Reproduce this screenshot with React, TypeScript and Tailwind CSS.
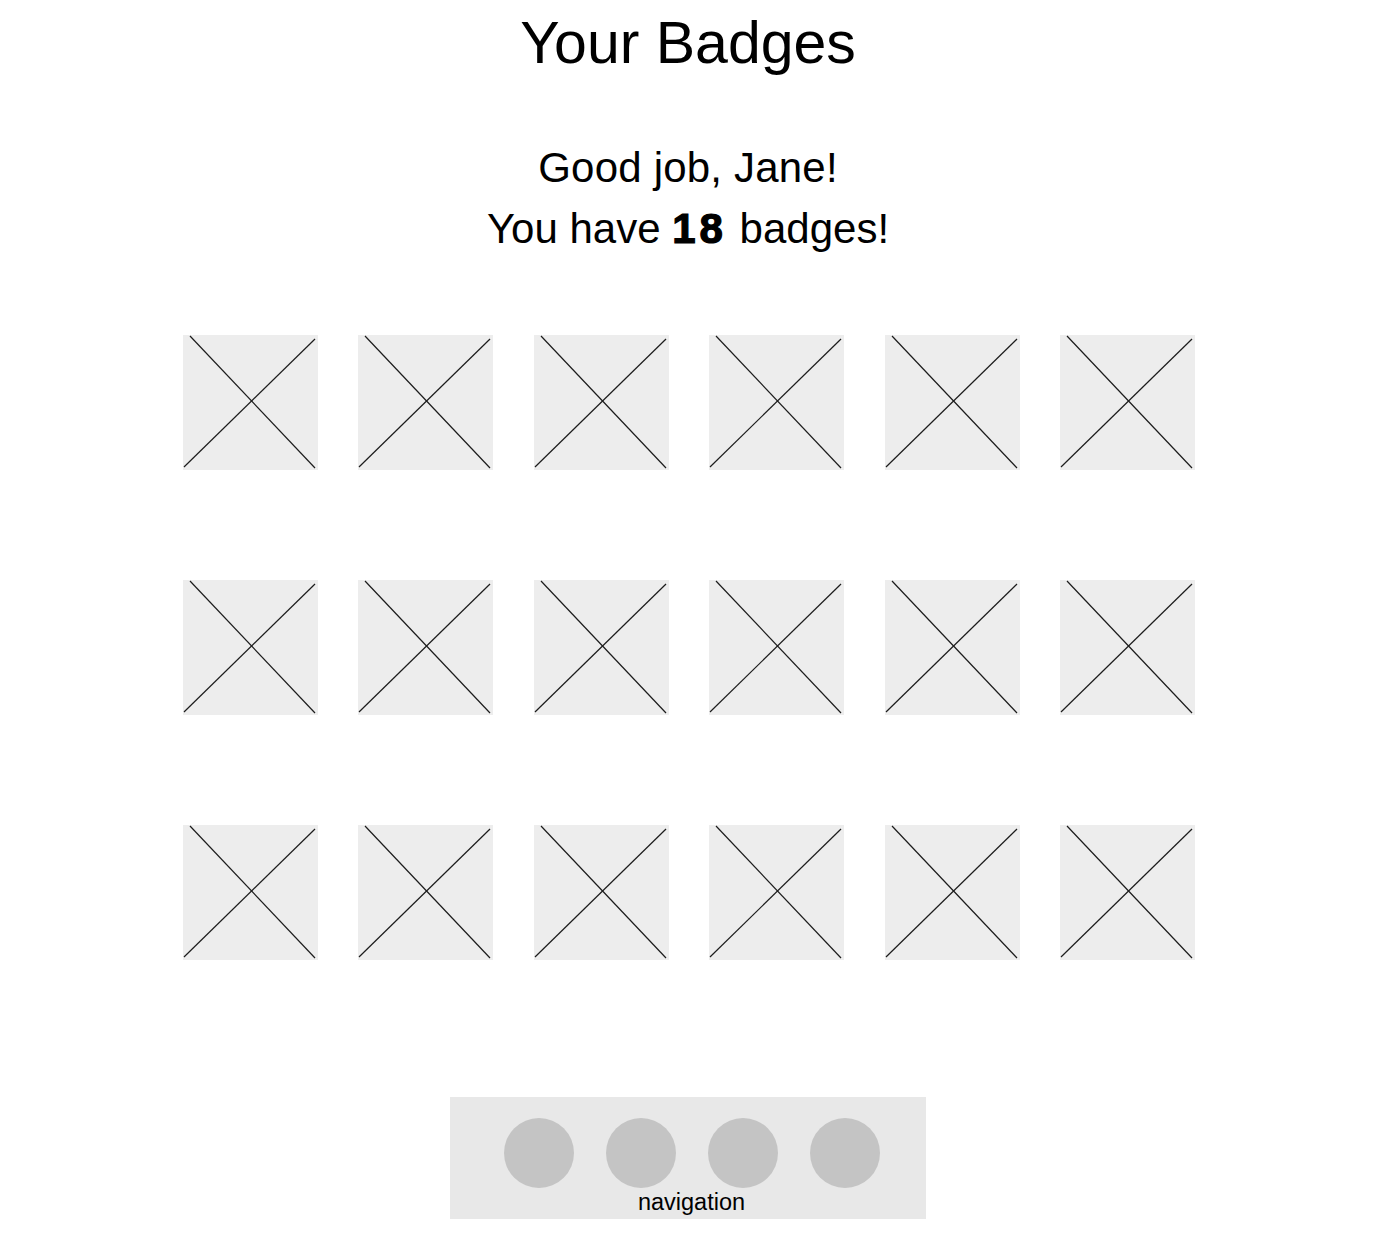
import React from "react";

function Badge() {
  return (
    <div className="w-[135px] h-[135px] bg-[#ededed]">
      <svg width="135" height="135" viewBox="0 0 135 135" className="block">
        <line x1="7" y1="1" x2="132" y2="133" stroke="#1c1c1c" strokeWidth="1.2" />
        <line x1="1" y1="132" x2="132" y2="4" stroke="#1c1c1c" strokeWidth="1.2" />
      </svg>
    </div>
  );
}

export default function App() {
  const badges = Array.from({ length: 18 });
  return (
    <div
      className="w-[1376px] h-[1236px] bg-white text-black flex flex-col items-center"
      style={{ fontFamily: '"Liberation Sans", Arial, sans-serif' }}
    >
      <h1 className="mt-[14px] text-[59px] leading-[59px] font-normal">Your Badges</h1>
      <p className="mt-[74px] text-[42px] leading-[42px] tracking-[0.2px]">Good job, Jane!</p>
      <p className="mt-[19px] text-[42px] leading-[42px]">
        You have{" "}
        <span className="font-bold tracking-[4px] mr-[1px] [-webkit-text-stroke:1.2px_black]">18</span>{" "}
        badges!
      </p>
      <div className="mt-[85px] ml-[2px] grid grid-cols-6 gap-x-[40.4px] gap-y-[110px]">
        {badges.map((_, i) => (
          <Badge key={i} />
        ))}
      </div>
      <nav className="mt-[137px] w-[476px] h-[122px] bg-[#e8e8e8] pl-[7px] pt-[21px] flex flex-col items-center">
        <div className="flex gap-[32px]">
          {[0, 1, 2, 3].map((i) => (
            <div key={i} className="w-[70px] h-[70px] rounded-full bg-[#c4c4c4]" />
          ))}
        </div>
        <div className="mt-[3px] text-[23.5px] leading-[23.5px]">navigation</div>
      </nav>
    </div>
  );
}
